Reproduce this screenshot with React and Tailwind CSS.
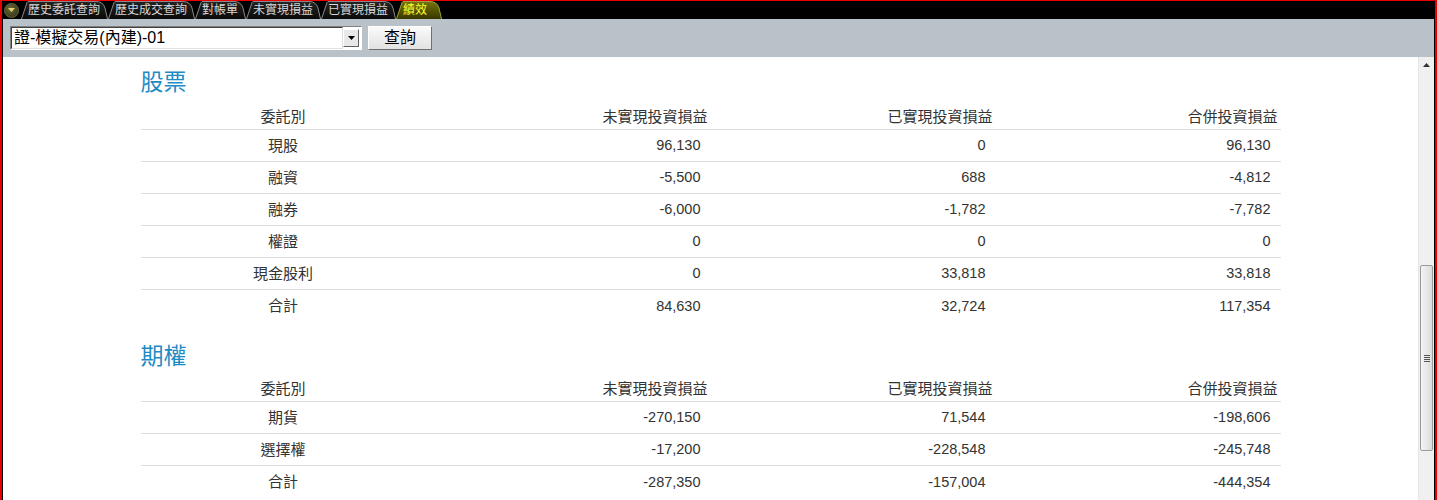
import { useId } from "react";

const font = { fontFamily: '"Liberation Sans", "Noto Sans CJK TC", sans-serif' };

const tabs = [
  { label: "歷史委託查詢", w: 87 },
  { label: "歷史成交查詢", w: 87 },
  { label: "對帳單", w: 51 },
  { label: "未實現損益", w: 75 },
  { label: "已實現損益", w: 75 },
  { label: "績效", w: 46, active: true },
];

const stock = [
  ["現股", "96,130", "0", "96,130"],
  ["融資", "-5,500", "688", "-4,812"],
  ["融券", "-6,000", "-1,782", "-7,782"],
  ["權證", "0", "0", "0"],
  ["現金股利", "0", "33,818", "33,818"],
  ["合計", "84,630", "32,724", "117,354"],
];

const options = [
  ["期貨", "-270,150", "71,544", "-198,606"],
  ["選擇權", "-17,200", "-228,548", "-245,748"],
  ["合計", "-287,350", "-157,004", "-444,354"],
];

const Tab = ({ label, w, active }) => {
  const id = useId();
  const d = `M0.5,18 L6,1.5 Q6.5,0.5 8,0.5 L${w - 12},0.5 Q${w - 5},0.5 ${w - 3},7 L${w - 0.5},18`;
  return (
    <div className="relative h-[18px] shrink-0" style={{ width: w }}>
      <svg className="absolute inset-0" width={w} height="18" viewBox={`0 0 ${w} 18`}>
        <defs>
          <linearGradient id={id} x1="0" y1="0" x2="0" y2="1">
            <stop offset="0" stopColor={active ? "#74740a" : "#242424"} />
            <stop offset="1" stopColor={active ? "#363600" : "#0a0a0a"} />
          </linearGradient>
        </defs>
        <path d={d} fill={`url(#${id})`} stroke={active ? "#a0a038" : "#8a8a8a"} strokeWidth="1" />
      </svg>
      <span
        className={`relative block pl-[7px] pt-[2px] text-[12px] leading-[15px] whitespace-nowrap ${
          active ? "text-[#ffff30]" : "text-[#d8d8d8]"
        }`}
      >
        {label}
      </span>
    </div>
  );
};

const Section = ({ title, rows, first }) => (
  <section className={first ? "mt-[10px]" : "mt-[19px]"}>
    <h2 className={`h-[30px] text-[23px] leading-[30px] text-[#1f8bc3] ${first ? "mb-[6px]" : "mb-[4px]"}`}>
      {title}
    </h2>
    <div className="grid h-[27px] grid-cols-4 items-center border-b border-[#dddddd] pt-[2px] text-[15px] text-[#333]">
      <div className="text-center">委託別</div>
      <div className="pr-[3px] text-right">未實現投資損益</div>
      <div className="pr-[3px] text-right">已實現投資損益</div>
      <div className="pr-[3px] text-right">合併投資損益</div>
    </div>
    {rows.map((r, i) => (
      <div
        key={r[0] + i}
        className={`grid h-[32px] grid-cols-4 items-center pt-[1px] text-[14.5px] text-[#333] ${
          i < rows.length - 1 ? "border-b border-[#dddddd]" : ""
        }`}
      >
        <div className="text-center text-[15px]">{r[0]}</div>
        <div className="pr-[10px] text-right">{r[1]}</div>
        <div className="pr-[10px] text-right">{r[2]}</div>
        <div className="pr-[10px] text-right">{r[3]}</div>
      </div>
    ))}
  </section>
);

export default function App() {
  return (
    <div className="h-[500px] w-[1437px] overflow-hidden border-x-2 border-t border-[#e80000] bg-black" style={font}>
      <div className="flex h-full flex-col border-x border-black">
        {/* tab strip */}
        <div className="flex h-[18px] items-center bg-black">
          <div className="ml-[1px] mr-[2px] flex h-[15px] w-[15px] items-center justify-center rounded-full border border-[#6b6b40] bg-[radial-gradient(circle_at_40%_35%,#6a6a38,#2a2a10)]">
            <svg width="7" height="4" viewBox="0 0 7 4">
              <path d="M0,0 L7,0 L3.5,4 Z" fill="#e8d070" />
            </svg>
          </div>
          {tabs.map((t) => (
            <Tab key={t.label} {...t} />
          ))}
        </div>

        {/* toolbar */}
        <div className="flex h-[38px] items-center gap-[6px] bg-[#b8c2c8] pl-[7px]">
          <div className="flex h-[24px] w-[352px] items-center border border-t-[#808080] border-l-[#808080] border-b-white border-r-white bg-white">
            <div className="flex h-full flex-1 items-center border border-t-[#404040] border-l-[#404040] border-b-[#e0e0e0] border-r-[#e0e0e0] pl-[2px] text-[16px] text-black">
              證-模擬交易(內建)-01
            </div>
            <div className="mr-[2px] flex h-[18px] w-[16px] items-center justify-center border border-t-white border-l-white border-b-[#606060] border-r-[#606060] bg-[#e8e8e8]">
              <svg width="7" height="4" viewBox="0 0 7 4">
                <path d="M0,0 L7,0 L3.5,4 Z" fill="#000" />
              </svg>
            </div>
          </div>
          <button className="flex h-[24px] w-[64px] items-center justify-center border border-t-white border-l-white border-b-[#707070] border-r-[#707070] bg-[linear-gradient(#fafafa,#e2e2e2)] text-[16px] text-black">
            查詢
          </button>
        </div>

        {/* content + scrollbar */}
        <div className="flex min-h-0 flex-1 bg-white">
          <div className="flex-1">
            <div className="mx-auto w-[1140px]">
              <Section title="股票" rows={stock} first />
              <Section title="期權" rows={options} />
            </div>
          </div>
          <div className="relative w-[16px] shrink-0 border-l border-[#e6e6e6] bg-[#f0f0f0]">
            <svg className="absolute left-[4px] top-[6px]" width="7" height="4" viewBox="0 0 7 4">
              <path d="M3.5,0 L7,4 L0,4 Z" fill="#333" />
            </svg>
            <div className="absolute left-[1px] top-[208px] flex h-[186px] w-[13px] items-center justify-center rounded-[2px] border border-[#9a9a9a] bg-[linear-gradient(90deg,#f4f4f4,#dcdcdc)]">
              <div className="flex w-[6px] flex-col gap-[1px]">
                <div className="h-px bg-[#555]" />
                <div className="h-px bg-[#555]" />
                <div className="h-px bg-[#555]" />
                <div className="h-px bg-[#555]" />
              </div>
            </div>
          </div>
        </div>
      </div>
    </div>
  );
}
